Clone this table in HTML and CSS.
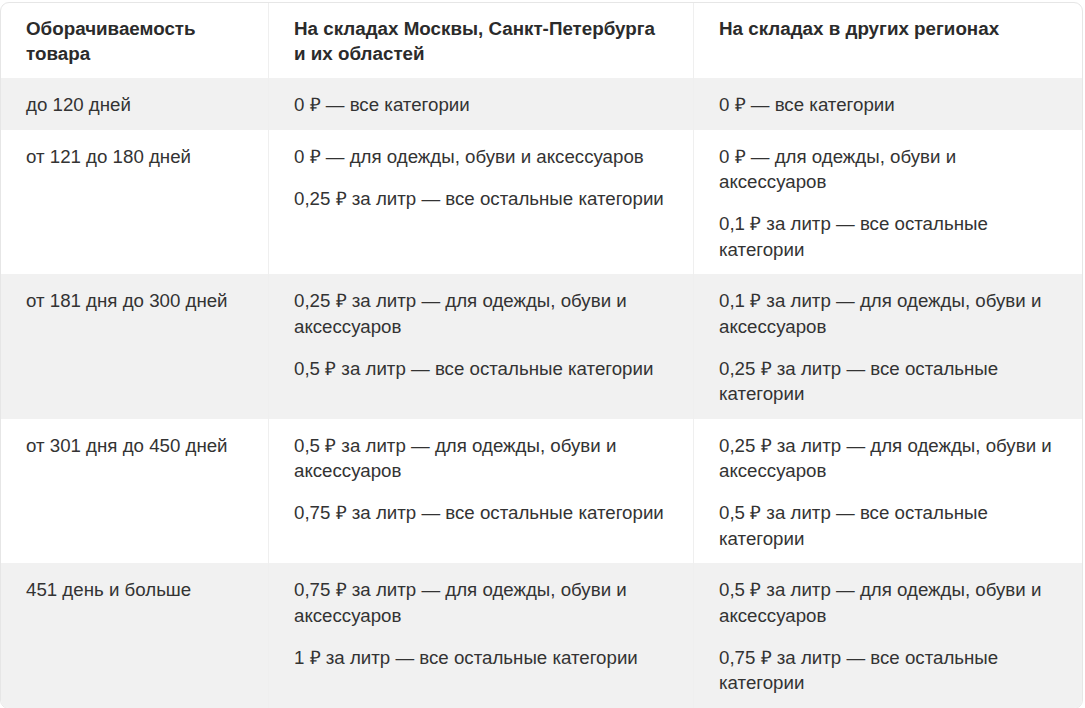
FILE: index.html
```html
<!DOCTYPE html>
<html lang="ru">
<head>
<meta charset="utf-8">
<link rel="stylesheet" href="styles.css">
</head>
<body>
<div class="wrap">
<table class="tariffs">
  <colgroup>
    <col class="c1"><col class="c2"><col class="c3">
  </colgroup>
  <thead>
    <tr>
      <th>Оборачиваемость товара</th>
      <th>На складах Москвы, Санкт-Петербурга и их областей</th>
      <th>На складах в других регионах</th>
    </tr>
  </thead>
  <tbody>
    <tr class="alt">
      <td><p>до 120 дней</p></td>
      <td><p>0 ₽ — все категории</p></td>
      <td><p>0 ₽ — все категории</p></td>
    </tr>
    <tr>
      <td><p>от 121 до 180 дней</p></td>
      <td><p>0 ₽ — для одежды, обуви и аксессуаров</p><p>0,25 ₽ за литр — все остальные категории</p></td>
      <td><p>0 ₽ — для одежды, обуви и аксессуаров</p><p>0,1 ₽ за литр — все остальные категории</p></td>
    </tr>
    <tr class="alt">
      <td><p>от 181 дня до 300 дней</p></td>
      <td><p>0,25 ₽ за литр — для одежды, обуви и аксессуаров</p><p>0,5 ₽ за литр — все остальные категории</p></td>
      <td><p>0,1 ₽ за литр — для одежды, обуви и аксессуаров</p><p>0,25 ₽ за литр — все остальные категории</p></td>
    </tr>
    <tr>
      <td><p>от 301 дня до 450 дней</p></td>
      <td><p>0,5 ₽ за литр — для одежды, обуви и аксессуаров</p><p>0,75 ₽ за литр — все остальные категории</p></td>
      <td><p>0,25 ₽ за литр — для одежды, обуви и аксессуаров</p><p>0,5 ₽ за литр — все остальные категории</p></td>
    </tr>
    <tr class="alt">
      <td><p>451 день и больше</p></td>
      <td><p>0,75 ₽ за литр — для одежды, обуви и аксессуаров</p><p>1 ₽ за литр — все остальные категории</p></td>
      <td><p>0,5 ₽ за литр — для одежды, обуви и аксессуаров</p><p>0,75 ₽ за литр — все остальные категории</p></td>
    </tr>
  </tbody>
</table>
</div>
</body>
</html>
```

FILE: styles.css
```css
html, body {
  margin: 0;
  padding: 0;
  background: #ffffff;
}

body {
  font-family: "Liberation Sans", Arial, sans-serif;
  font-size: 18.7px;
  line-height: 25.5px;
  color: #333333;
}

.wrap {
  padding-top: 2px;
  width: 1083px;
}

.tariffs {
  width: 1083px;
  table-layout: fixed;
  border-collapse: separate;
  border-spacing: 0;
  border: 1px solid #e6e6e6;
  border-radius: 9px;
  overflow: hidden;
}

.c1 { width: 267px; }
.c2 { width: 425px; }
.c3 { width: auto; }

.tariffs th,
.tariffs td {
  padding: 14px 25px 12px;
  text-align: left;
  vertical-align: top;
  border-left: 1px solid #efefef;
}

.tariffs th:first-child,
.tariffs td:first-child {
  border-left: none;
}

.tariffs th {
  font-size: 18.8px;
  line-height: 25px;
  font-weight: bold;
  color: #2b2b2b;
  padding-top: 13px;
  padding-bottom: 12px;
}

.tariffs .alt td {
  background: #f1f1f1;
}

.tariffs p {
  margin: 0 0 16.5px;
}

.tariffs p:last-child {
  margin-bottom: 0;
}
```
